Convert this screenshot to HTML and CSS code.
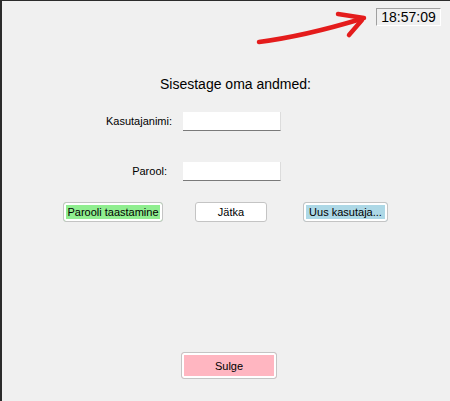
FILE: index.html
```html
<!DOCTYPE html>
<html lang="et">
<head>
<meta charset="utf-8">
<title>Sisselogimine</title>
<link rel="stylesheet" href="styles.css">
</head>
<body>
<div class="frame">
  <div class="edge"></div>
  <div class="window">
    <div class="clockbar">
      <div class="clock">18:57:09</div>
    </div>
    <div class="title">Sisestage oma andmed:</div>
    <div class="field field-user">
      <label class="label" for="user">Kasutajanimi:</label>
      <input class="textbox" id="user" type="text">
    </div>
    <div class="field field-pass">
      <label class="label label-short" for="pass">Parool:</label>
      <input class="textbox" id="pass" type="password">
    </div>
    <div class="actions">
      <button class="btn btn-green">Parooli taastamine</button>
      <button class="btn btn-white">Jätka</button>
      <button class="btn btn-blue">Uus kasutaja...</button>
    </div>
    <div class="closebar">
      <button class="btn btn-pink">Sulge</button>
    </div>
    <svg class="arrow" width="450" height="60" viewBox="0 0 450 60" aria-hidden="true">
      <g fill="none" stroke="#e41c1c" stroke-width="4.5" stroke-linecap="round" stroke-linejoin="round">
        <path d="M259 42 Q 305 36 361 19"/>
        <path d="M338 14 L 364 18"/>
        <path d="M362 20 L 349 35"/>
      </g>
    </svg>
  </div>
</div>
</body>
</html>
```
FILE: styles.css
```css
* { box-sizing: border-box; }

html, body {
  margin: 0;
  padding: 0;
  background: #f0f0f0;
}

body {
  font-family: "Liberation Sans", Arial, sans-serif;
  color: #000;
}

.frame {
  display: flex;
  height: 401px;
  width: 450px;
  border-top: 1px solid #2b2b2b;
  overflow: hidden;
}

.edge {
  width: 2px;
  flex: none;
  background: #2b2b2b;
}

.window {
  flex: 1;
  position: relative;
  display: flex;
  flex-direction: column;
}

.clockbar {
  display: flex;
  justify-content: flex-end;
  padding: 7px 9px 0 0;
}

.clock {
  width: 65px;
  height: 18px;
  border-top: 1px solid #a0a0a0;
  border-left: 1px solid #a0a0a0;
  border-bottom: 1px solid #ffffff;
  border-right: 1px solid #ffffff;
  font-size: 14px;
  line-height: 16px;
  text-align: center;
  color: #000;
}

.title {
  margin-top: 50px;
  padding-left: 158px;
  font-size: 14px;
  line-height: 17px;
  color: #000;
}

.field {
  display: flex;
  align-items: center;
  gap: 11px;
}

.field-user { margin-top: 19px; }
.field-pass { margin-top: 31px; }

.label {
  width: 170px;
  text-align: right;
  font-size: 11px;
  line-height: 13px;
}

.label-short { padding-right: 5px; }

.textbox {
  width: 98px;
  height: 19px;
  margin: 0;
  padding: 0 2px;
  background: #fff;
  border: none;
  border-right: 1px solid #dcdcdc;
  border-bottom: 1px solid #7a7a7a;
  font: 11px "Liberation Sans", Arial, sans-serif;
  outline: none;
}

.actions {
  display: flex;
  margin-top: 21px;
  padding-left: 61px;
}

.btn {
  margin: 0;
  padding: 0;
  height: 20px;
  border: 1px solid #c4c4c4;
  border-radius: 3px;
  box-shadow: inset 0 0 0 2px #ffffff;
  font: 11px/16px "Liberation Sans", Arial, sans-serif;
  color: #000;
  text-align: center;
}

.btn-green { width: 100px; background: #90ee90; }
.btn-white { width: 72px; background: #ffffff; margin-left: 32px; }
.btn-blue  { width: 85px; background: #add8e6; margin-left: 36px; }

.closebar {
  margin-top: 130px;
  padding-left: 179px;
}

.btn-pink {
  width: 96px;
  height: 27px;
  background: #ffb6c1;
}

.arrow {
  position: absolute;
  left: -2px;
  top: -1px;
  pointer-events: none;
}
```
